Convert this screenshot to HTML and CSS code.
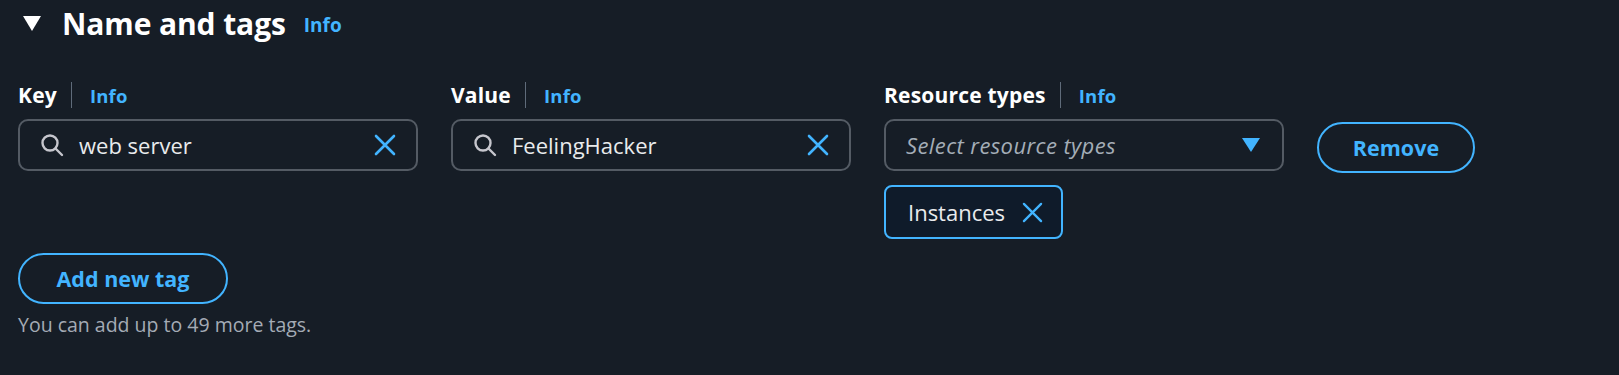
FILE: index.html
```html
<!DOCTYPE html>
<html lang="en">
<head>
    <meta charset="UTF-8">
    <title>Name and tags</title>
    <link rel="stylesheet" href="styles.css">
</head>
<body>
    <div class="section">
        <div class="section-header">
            <svg class="caret" width="18" height="15" viewBox="0 0 18 15"><polygon points="0,0 18,0 9,15" fill="#ffffff"/></svg>
            <h2>Name and tags</h2>
            <a href="#" class="info">Info</a>
        </div>

        <div class="tag-row">
            <div class="field">
                <div class="label"><span>Key</span><i class="sep"></i><a href="#" class="info">Info</a></div>
                <div class="input">
                    <svg class="search" width="24" height="24" viewBox="0 0 24 24"><circle cx="10" cy="10" r="7.5" fill="none" stroke="#c6c6cd" stroke-width="2.4"/><line x1="15.5" y1="15.5" x2="22" y2="22" stroke="#c6c6cd" stroke-width="2.4" stroke-linecap="round"/></svg>
                    <span class="value">web server</span>
                    <svg class="clear" width="22" height="22" viewBox="0 0 22 22"><path d="M2 2 L20 20 M20 2 L2 20" stroke="#42b4ff" stroke-width="2.6" stroke-linecap="round"/></svg>
                </div>
            </div>
            <div class="field">
                <div class="label"><span>Value</span><i class="sep"></i><a href="#" class="info">Info</a></div>
                <div class="input">
                    <svg class="search" width="24" height="24" viewBox="0 0 24 24"><circle cx="10" cy="10" r="7.5" fill="none" stroke="#c6c6cd" stroke-width="2.4"/><line x1="15.5" y1="15.5" x2="22" y2="22" stroke="#c6c6cd" stroke-width="2.4" stroke-linecap="round"/></svg>
                    <span class="value">FeelingHacker</span>
                    <svg class="clear" width="22" height="22" viewBox="0 0 22 22"><path d="M2 2 L20 20 M20 2 L2 20" stroke="#42b4ff" stroke-width="2.6" stroke-linecap="round"/></svg>
                </div>
            </div>
            <div class="field">
                <div class="label"><span>Resource types</span><i class="sep"></i><a href="#" class="info">Info</a></div>
                <div class="input select">
                    <span class="placeholder">Select resource types</span>
                    <svg class="arrow" width="18" height="14" viewBox="0 0 18 14"><polygon points="0,0 18,0 9,14" fill="#42b4ff"/></svg>
                </div>
                <div class="token">
                    <span>Instances</span>
                    <svg width="21" height="21" viewBox="0 0 22 22"><path d="M2 2 L20 20 M20 2 L2 20" stroke="#42b4ff" stroke-width="2.4" stroke-linecap="round"/></svg>
                </div>
            </div>
            <div class="remove-cell">
                <button class="btn remove">Remove</button>
            </div>
        </div>

        <button class="btn add">Add new tag</button>
        <p class="hint">You can add up to 49 more tags.</p>
    </div>
</body>
</html>
```

FILE: styles.css
```css
body {
    margin: 0;
    background-color: #161d26;
    color: #ffffff;
    font-family: "Open Sans", Arial, sans-serif;
}

.section {
    padding: 0 18px;
}

.section-header {
    display: flex;
    align-items: center;
    height: 46px;
}

.caret {
    margin-left: 5px;
    margin-right: 21px;
}

.section-header h2 {
    margin: 0;
    font-size: 30px;
    font-weight: 700;
    letter-spacing: -0.1px;
}

.info {
    color: #42b4ff;
    text-decoration: none;
    font-weight: 700;
    font-size: 18.5px;
}

.section-header .info {
    margin-left: 18px;
    margin-top: 4px;
    font-size: 19px;
}

.tag-row {
    display: grid;
    grid-template-columns: 400px 400px 400px auto;
    column-gap: 33px;
    margin-top: 36px;
}

.label {
    display: flex;
    align-items: center;
    height: 26px;
    font-size: 21px;
    font-weight: 700;
    letter-spacing: 0.2px;
}

.sep {
    width: 1px;
    height: 26px;
    background: #5f6b7a;
    margin: 0 18px 0 14px;
}

.input {
    display: flex;
    align-items: center;
    box-sizing: border-box;
    height: 52px;
    margin-top: 11px;
    padding: 0 20px 0 20px;
    border: 2px solid #545b64;
    border-radius: 10px;
    font-size: 22px;
    color: #e9ebed;
}

.input .search {
    margin-right: 15px;
}

.input .value {
    flex: 1;
}

.select {
    padding-left: 20px;
    padding-right: 22px;
}

.placeholder {
    flex: 1;
    font-style: italic;
    letter-spacing: 0.4px;
    color: #a4adb7;
}

.token {
    display: inline-flex;
    align-items: center;
    box-sizing: border-box;
    height: 54px;
    margin-top: 14px;
    padding: 0 18px 0 22px;
    background: #0f1b2a;
    border: 2px solid #42b4ff;
    border-radius: 8px;
    font-size: 22px;
    color: #e9ebed;
}

.token span {
    margin-right: 17px;
}

.remove-cell {
    padding-top: 40px;
}

.btn {
    box-sizing: border-box;
    height: 51px;
    border: 2px solid #42b4ff;
    border-radius: 26px;
    background: transparent;
    color: #42b4ff;
    font-family: "Open Sans", Arial, sans-serif;
    font-size: 21.5px;
    font-weight: 700;
    cursor: pointer;
}

.remove {
    width: 158px;
}

.add {
    width: 210px;
    margin-top: 14px;
}

.hint {
    margin: 7px 0 0 0;
    font-size: 19.5px;
    color: #a4abb5;
}
```
